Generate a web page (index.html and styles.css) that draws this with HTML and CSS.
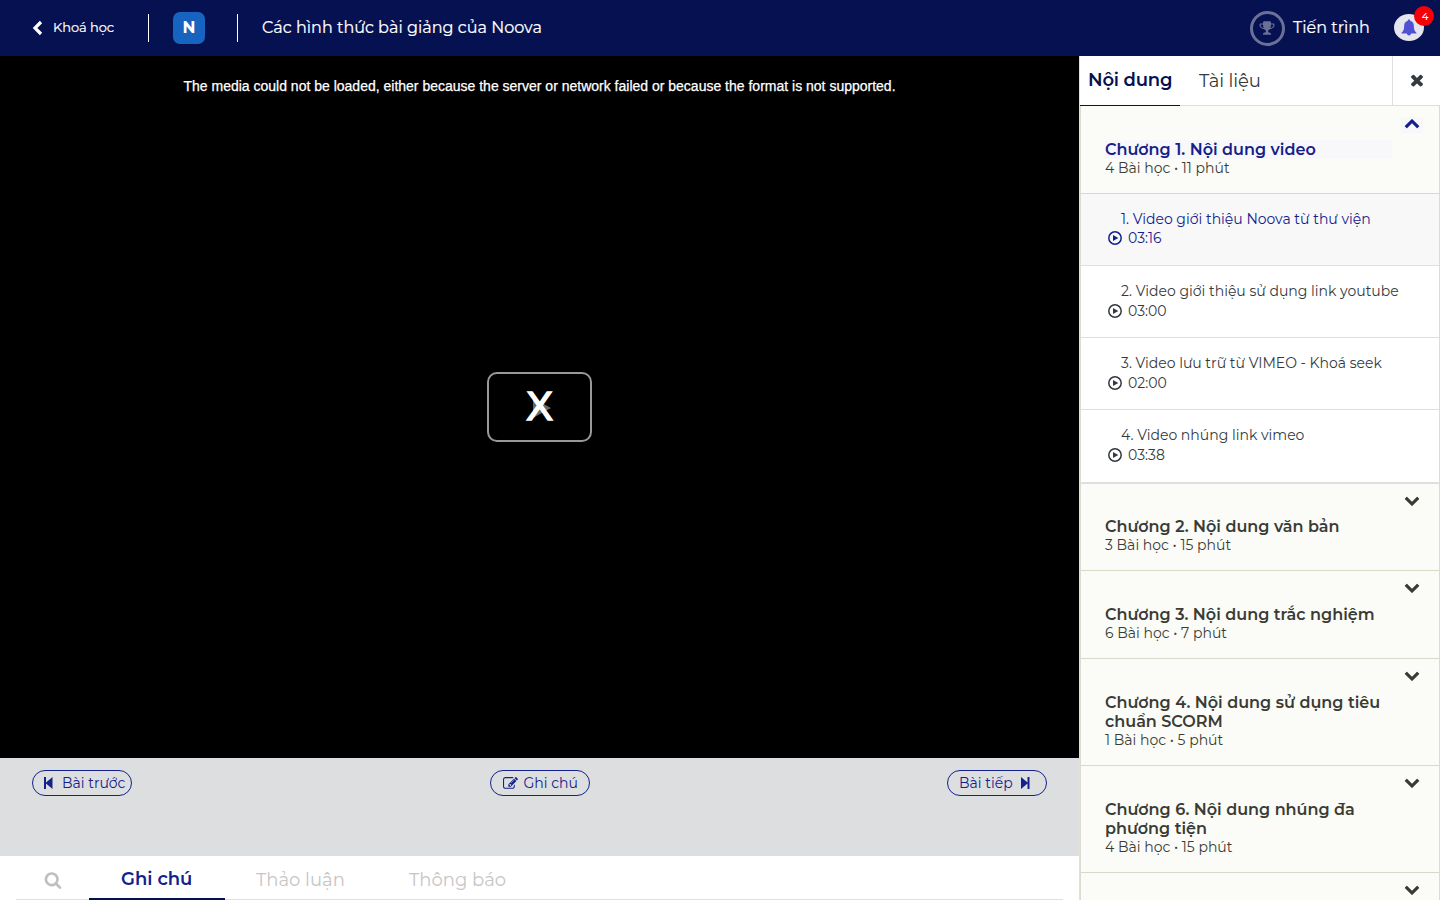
FILE: index.html
```html
<!DOCTYPE html>
<html lang="vi">
<head>
<meta charset="utf-8">
<title>Các hình thức bài giảng của Noova</title>
<link rel="stylesheet" href="styles.css">
</head>
<body>
<svg class="defs" width="0" height="0">
  <symbol id="down" viewBox="0 0 1792 1792"><path d="M1683 808l-742 741q-19 19-45 19t-45-19l-742-741q-19-19-19-45.500t19-45.500l166-165q19-19 45-19t45 19l531 531 531-531q19-19 45-19t45 19l166 165q19 19 19 45.500t-19 45.500z"/></symbol>
  <symbol id="play-thin" viewBox="0 0 16 16"><circle cx="8" cy="8" r="6.200" fill="none" stroke="currentColor" stroke-width="1.500"/><path d="M6 4.900v6.200L11.300 8z"/></symbol>
</svg>
<header class="header">
  <a class="back"><svg width="11" height="16" viewBox="0 0 11 16"><path d="M9 2L3 8l6 6" fill="none" stroke="#fff" stroke-width="3.200"/></svg><span>Khoá học</span></a>
  <i class="divider"></i>
  <b class="logo">N</b>
  <i class="divider second"></i>
  <span class="course">Các hình thức bài giảng của Noova</span>
  <div class="progress"><span class="ring"><svg width="16" height="16" viewBox="0 0 1792 1792"><path d="M522 883q-74-162-74-371h-256v96q0 78 94.500 162t235.500 113zm1078-275v-96h-256q0 209-74 371 141-29 235.500-113t94.500-162zm128-128v128q0 71-41.500 143t-112 130-173 97.500-215.500 44.500q-42 54-95 95-38 34-52.500 72.500t-14.500 89.500q0 54 30.500 91t97.500 37q75 0 133.500 45.500t58.500 114.500v64q0 14-9 23t-23 9h-832q-14 0-23-9t-9-23v-64q0-69 58.500-114.500t133.500-45.500q67 0 97.500-37t30.500-91q0-51-14.500-89.500t-52.500-72.500q-53-41-95-95-113-5-215.500-44.500t-173-97.500-112-130-41.500-143v-128q0-40 28-68t68-28h288v-96q0-66 47-113t113-47h576q66 0 113 47t47 113v96h288q40 0 68 28t28 68z"/></svg></span><span class="progress-text">Tiến trình</span></div>
  <div class="bell"><svg width="16" height="17" viewBox="0 0 16 17"><path d="M8 .5c.7 0 1.200.5 1.200 1.200 2.300.6 3.600 2.300 3.600 4.800 0 3.700.8 5.700 2.700 7.300v.7H10a2 2 0 0 1-4 0H.5v-.7c1.900-1.600 2.700-3.600 2.700-7.300 0-2.500 1.300-4.200 3.600-4.800C6.800 1 7.300.5 8 .5z"/></svg><span class="count">4</span></div>
</header>
<div class="page">
  <main class="main">
    <section class="video">
      <p class="error">The media could not be loaded, either because the server or network failed or because the format is not supported.</p>
      <div class="bigplay"><svg width="22" height="24" viewBox="0 0 22 24"><path d="M4 3l18 10L4 23z" fill="#666"/></svg><span class="cross">X</span></div>
    </section>
    <nav class="controls">
      <button class="pill prev"><svg width="9" height="12" viewBox="0 0 9 12"><path d="M0 0h2v5.500L8.500 0v12L2 6.500V12H0z"/></svg><span>Bài trước</span></button>
      <button class="pill note"><svg width="15" height="15" viewBox="0 0 1792 1792"><path d="M888 1184l116-116-152-152-116 116v56h96v96h56zm440-720q-16-16-33 1l-350 350q-17 17-1 33t33-1l350-350q17-17 1-33zm80 594v190q0 119-84.500 203.500t-203.500 84.500h-832q-119 0-203.500-84.500t-84.500-203.500v-832q0-119 84.500-203.500t203.500-84.500h832q63 0 117 25 15 7 18 23 3 17-9 29l-49 49q-14 14-32 8-23-6-45-6h-832q-66 0-113 47t-47 113v832q0 66 47 113t113 47h832q66 0 113-47t47-113v-126q0-13 9-22l64-64q15-15 35-7t20 29zm-96-738l288 288-672 672h-288v-288zm444 132l-92 92-288-288 92-92q28-28 68-28t68 28l152 152q28 28 28 68t-28 68z"/></svg><span>Ghi chú</span></button>
      <button class="pill next"><span>Bài tiếp</span><svg width="9" height="12" viewBox="0 0 9 12"><path d="M8.500 0h-2v5.500L0 0v12l6.500-5.500V12h2z"/></svg></button>
    </nav>
    <nav class="tabs">
      <span class="search"><svg width="18" height="18" viewBox="0 0 1792 1792"><path d="M1216 832q0-185-131.500-316.500t-316.500-131.500-316.500 131.500-131.500 316.500 131.500 316.500 316.500 131.500 316.500-131.500 131.500-316.500zm512 832q0 52-38 90t-90 38q-54 0-90-38l-343-342q-179 124-399 124-143 0-273.500-55.500t-225-150-150-225-55.500-273.500 55.500-273.500 150-225 225-150 273.500-55.500 273.500 55.500 225 150 150 225 55.500 273.500q0 220-124 399l343 343q37 37 37 90z"/></svg></span>
      <span class="tab active">Ghi chú</span>
      <span class="tab discuss">Thảo luận</span>
      <span class="tab announce">Thông báo</span>
    </nav>
  </main>
  <aside class="side">
    <div class="side-tabs">
      <span class="side-tab on">Nội dung</span>
      <span class="side-tab docs">Tài liệu</span>
      <span class="close"><svg width="18" height="18" viewBox="0 0 1792 1792"><path d="M1490 1322q0 40-28 68l-136 136q-28 28-68 28t-68-28l-294-294-294 294q-28 28-68 28t-68-28l-136-136q-28-28-28-68t28-68l294-294-294-294q-28-28-28-68t28-68l136-136q28-28 68-28t68 28l294 294 294-294q28-28 68-28t68 28l136 136q28 28 28 68t-28 68l-294 294 294 294q28 28 28 68z"/></svg></span>
    </div>
    <div class="list">
      <section class="chapter open">
        <div class="text"><h3>Chương 1. Nội dung video</h3><p>4 Bài học • 11 phút</p></div><svg class="arrow" width="22" height="16"><use href="#down" x="3" width="16" height="16"/></svg>
      </section>
      <article class="lesson current"><h4>1. Video giới thiệu Noova từ thư viện</h4><p><svg width="16" height="16"><use href="#play-thin"/></svg>03:16</p></article>
      <article class="lesson"><h4>2. Video giới thiệu sử dụng link youtube</h4><p><svg width="16" height="16"><use href="#play-thin"/></svg>03:00</p></article>
      <article class="lesson"><h4>3. Video lưu trữ từ VIMEO - Khoá seek</h4><p><svg width="16" height="16"><use href="#play-thin"/></svg>02:00</p></article>
      <article class="lesson last"><h4>4. Video nhúng link vimeo</h4><p><svg width="16" height="16"><use href="#play-thin"/></svg>03:38</p></article>
      <section class="chapter short">
        <div class="text"><h3>Chương 2. Nội dung văn bản</h3><p>3 Bài học • 15 phút</p></div><svg class="arrow" width="16" height="16"><use href="#down"/></svg>
      </section>
      <section class="chapter">
        <div class="text"><h3>Chương 3. Nội dung trắc nghiệm</h3><p>6 Bài học • 7 phút</p></div><svg class="arrow" width="16" height="16"><use href="#down"/></svg>
      </section>
      <section class="chapter tall">
        <div class="text"><h3>Chương 4. Nội dung sử dụng tiêu<br>chuẩn SCORM</h3><p>1 Bài học • 5 phút</p></div><svg class="arrow" width="16" height="16"><use href="#down"/></svg>
      </section>
      <section class="chapter tall">
        <div class="text"><h3>Chương 6. Nội dung nhúng đa<br>phương tiện</h3><p>4 Bài học • 15 phút</p></div><svg class="arrow" width="16" height="16"><use href="#down"/></svg>
      </section>
      <section class="chapter"><div class="text"></div><svg class="arrow" width="16" height="16"><use href="#down"/></svg></section>
    </div>
  </aside>
</div>
</body>
</html>
```
FILE: styles.css
```css
* { box-sizing: border-box; margin: 0; padding: 0; }
body { width: 1440px; height: 900px; overflow: hidden; font-family: Montserrat, Inter, sans-serif; background: #fff; color: #343a40; display: flex; flex-direction: column; }
.defs { position: absolute; }
svg { fill: currentColor; flex: none; display: block; }
span, h3, h4, p { white-space: nowrap; }
.header { height: 56px; flex: none; background: #061151; color: #fff; display: flex; align-items: center; padding: 0 16px 0 32px; }
.back { display: flex; align-items: center; gap: 10px; width: 116px; font-size: 13px; letter-spacing: -.05px; }
.back span, .course, .progress-text { padding-bottom: 2px; -webkit-text-stroke: .2px #fff; }
.divider { width: 1px; height: 28px; background: #fff; margin-right: 24px; }
.second { margin-left: 32px; }
.logo { width: 32px; height: 32px; border-radius: 7px; background: #1664c0; text-align: center; line-height: 31px; font-size: 16px; }
.course { font-size: 16px; letter-spacing: .02px; }
.progress { margin-left: auto; display: flex; align-items: center; gap: 8px; width: 144px; font-size: 16px; }
.ring { width: 35px; height: 35px; border: 3px solid #6b7097; border-radius: 50%; display: flex; align-items: center; justify-content: center; color: #6b7097; }
.ring svg { margin-right: 1px; }
.bell { position: relative; width: 30px; height: 27px; margin-bottom: 1px; border-radius: 50%; background: #e4e5ee; color: #4f50d3; display: flex; align-items: center; justify-content: center; }
.count { position: absolute; left: 20px; top: -8px; width: 20px; height: 20px; border-radius: 50%; background: #f60006; color: #fff; font-size: 10px; line-height: 21px; padding-left: 2px; text-align: center; font-weight: 500; }
.page { display: flex; flex: 1; min-height: 0; }
.main { width: 1079px; display: flex; flex-direction: column; }
.video { height: 702px; background: #000; color: #fff; display: flex; flex-direction: column; align-items: center; }
.error { font: 14px/16px "Liberation Sans", sans-serif; margin-top: 22px; -webkit-text-stroke: .25px #fff; }
.bigplay { margin-top: 278px; width: 105px; height: 70px; border: 2px solid #999; border-radius: 10px; display: flex; align-items: center; justify-content: center; position: relative; }
.cross { position: absolute; inset: 0; font: 40px/65px "Liberation Sans", sans-serif; text-align: center; -webkit-text-stroke: 1.5px #fff; }
.controls { height: 98px; background: #dddee0; padding: 12px 32px; display: flex; justify-content: space-between; align-items: flex-start; }
.pill { width: 100px; height: 26px; border: 1px solid #13218a; border-radius: 13px; color: #13218a; background: none; font: 14px Montserrat, Inter, sans-serif; display: flex; align-items: center; }
.prev { padding-left: 11px; gap: 9px; }
.note { padding-left: 12px; gap: 6px; }
.next { padding-left: 11px; gap: 8px; }
.tabs { height: 44px; margin: 0 16px; border-bottom: 1px solid #dfe0e2; display: flex; font-size: 18px; line-height: 49px; color: #c6c6c6; }
.search { width: 73px; padding: 15px 0 0 28px; color: #bfbfbf; }
.tab { height: 44px; padding-left: 32px; }
.active { width: 136px; color: #13218a; font-weight: 600; border-bottom: 2px solid #061151; line-height: 47px; }
.discuss { width: 152px; padding-left: 31px; }
.announce { padding-left: 32px; }
.side { width: 361px; border-left: 1px solid #dee0e2; display: flex; flex-direction: column; }
.side-tabs { height: 50px; flex: none; display: flex; border-bottom: 1px solid #dcdfe1; font-size: 18px; line-height: 51px; }
.side-tab.on { height: 50px; width: 100px; padding-left: 8px; color: #061151; font-weight: 600; border-bottom: 1px solid #061151; line-height: 49px; letter-spacing: -.2px; }
.docs { padding-left: 19px; letter-spacing: -.1px; }
.close { margin-left: auto; width: 48px; border-left: 1px solid #dcdfe1; display: flex; align-items: center; justify-content: center; padding: 0 0 2px 0; }
.list { flex: 1; overflow: hidden; border: solid #dbdccf; border-width: 0 1px; }
.chapter { height: 88px; background: #fbfcf7; border-bottom: 1px solid #d8dac8; display: flex; justify-content: space-between; padding: 8px 19px 0 24px; color: #3a3b35; }
.text { padding-top: 26px; width: 287px; }
.chapter h3 { font-size: 16px; line-height: 19px; font-weight: 600; letter-spacing: .02px; }
.chapter p { font-size: 14px; line-height: 19px; }
.open h3, .open .arrow { color: #13218a; background: #f8f8fb; }
.open .arrow { transform: rotate(180deg); margin: 3px -3px 0 0; }
.short { height: 87px; }
.short .text { padding-top: 25px; }
.tall { height: 107px; }
.lesson { height: 72px; border-bottom: 1px solid #dddfe1; padding: 16px 0 0 26px; font-size: 14px; }
.lesson h4 { font-size: 14px; font-weight: 400; line-height: 19px; padding-left: 14px; }
.lesson p { line-height: 20px; display: flex; align-items: center; gap: 5px; }
.current { color: #13218a; background: #f8f8f9; }
.current p { line-height: 19px; height: 19px; }
.current svg { margin-bottom: 1px; }
.last { height: 74px; border-bottom-width: 2px; }
```
